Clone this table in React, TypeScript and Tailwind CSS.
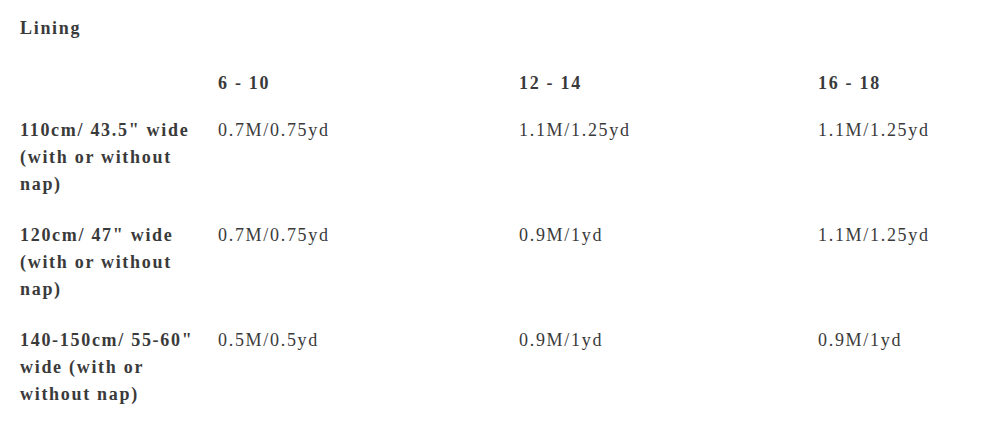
const sizes = ['6 - 10', '12 - 14', '16 - 18'];

const rows = [
  { label: '110cm/ 43.5" wide (with or without nap)', values: ['0.7M/0.75yd', '1.1M/1.25yd', '1.1M/1.25yd'] },
  { label: '120cm/ 47" wide (with or without nap)', values: ['0.7M/0.75yd', '0.9M/1yd', '1.1M/1.25yd'] },
  { label: '140-150cm/ 55-60" wide (with or without nap)', values: ['0.5M/0.5yd', '0.9M/1yd', '0.9M/1yd'] },
];

export default function App() {
  return (
    <div className="min-h-[435px] bg-white pl-5 pt-[15px] text-[#3a3a3a] text-[18px] leading-[27px] tracking-[1.7px] font-['Liberation_Serif',serif]">
      <h3 className="font-bold">Lining</h3>

      <div className="mt-7 grid grid-cols-[198px_301px_299px_1fr]">
        {/* header */}
        <div />
        {sizes.map((s) => (
          <div key={s} className="font-bold pb-5">
            {s}
          </div>
        ))}

        {rows.map((r, i) => (
          <div key={i} className="contents">
            <div className="font-bold pr-3 pb-6">{r.label}</div>
            {r.values.map((v, j) => (
              <div key={j} className="pb-6">
                {v}
              </div>
            ))}
          </div>
        ))}
      </div>
    </div>
  );
}
